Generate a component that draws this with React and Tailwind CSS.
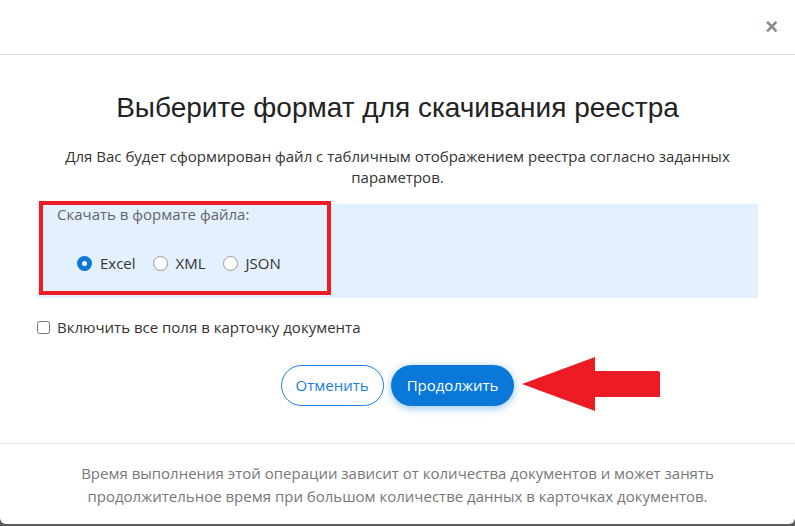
import { useState } from 'react';

export default function App() {
  const [format, setFormat] = useState('excel');
  const [allFields, setAllFields] = useState(false);

  const formats = [
    { id: 'excel', label: 'Excel' },
    { id: 'xml', label: 'XML' },
    { id: 'json', label: 'JSON' },
  ];

  return (
    <div className="w-[795px] h-[526px] bg-[#5a5a5a] overflow-hidden">
      <div className="h-[524px] bg-white rounded-b-[6px] flex flex-col text-[#333]" style={{ fontFamily: '"Open Sans", sans-serif' }}>
        {/* header */}
        <div className="h-[55px] shrink-0 border-b border-[#e3e3e3] flex items-center justify-end pr-[17px]">
          <button className="text-[#888] text-[22px] leading-none font-bold" style={{ fontFamily: '"Liberation Sans", sans-serif' }}>
            ×
          </button>
        </div>

        {/* body */}
        <div className="flex-1 px-[37px] pt-[37px]">
          <h2 className="text-center text-[28px] leading-[32px] text-[#222]" style={{ fontFamily: '"Liberation Sans", sans-serif' }}>
            Выберите формат для скачивания реестра
          </h2>
          <p className="text-center text-[15px] leading-[21px] mt-[22px] px-[10px]">
            Для Вас будет сформирован файл с табличным отображением реестра согласно заданных параметров.
          </p>

          <div className="relative mt-[16px] h-[94px] bg-[#e3f0fe] px-[20px] pt-0">
            <div className="text-[15px] leading-[21px] text-[#666]">Скачать в формате файла:</div>
            <div className="flex items-center gap-[17px] mt-[27px] pl-[20px]">
              {formats.map((f) => (
                <label key={f.id} className="flex items-center gap-[8px] text-[15px] text-[#333] cursor-pointer">
                  <span
                    onClick={() => setFormat(f.id)}
                    className={
                      format === f.id
                        ? 'w-[15px] h-[15px] rounded-full bg-[#0a78d8] flex items-center justify-center'
                        : 'w-[15px] h-[15px] rounded-full border border-[#999] bg-white'
                    }
                  >
                    {format === f.id && <span className="w-[5px] h-[5px] rounded-full bg-white" />}
                  </span>
                  {f.label}
                </label>
              ))}
            </div>
            {/* highlight frame */}
            <div className="absolute left-[2px] top-[-3px] w-[292px] h-[94px] border-[4px] border-[#ed1c24]" />
          </div>

          <label className="flex items-center gap-[7px] mt-[18px] text-[15px] text-[#333] cursor-pointer">
            <input
              type="checkbox"
              checked={allFields}
              onChange={(e) => setAllFields(e.target.checked)}
              className="w-[13px] h-[13px] m-0"
            />
            Включить все поля в карточку документа
          </label>

          <div className="flex items-center justify-center gap-[7px] mt-[26px] relative">
            <button className="h-[41px] px-[14px] rounded-full border border-[#1a7ee0] text-[#1a7ee0] text-[15px] bg-white">
              Отменить
            </button>
            <button className="h-[41px] px-[16px] rounded-full bg-[#0a78d8] text-white text-[15px] shadow-[0_2px_8px_rgba(10,120,216,0.45)]">
              Продолжить
            </button>
            <svg className="absolute left-[485px] top-[-8px]" width="140" height="54" viewBox="0 0 140 54">
              <path d="M0 27 L73 0 L73 14 L136 14 Q138 14 138 16 L138 40 L73 40 L73 54 Z" fill="#ed1c24" />
            </svg>
          </div>
        </div>

        {/* footer */}
        <div className="h-[81px] shrink-0 border-t border-[#e3e3e3] flex items-center justify-center px-[50px] pt-[2px]">
          <p className="text-center text-[15px] leading-[23px] text-[#777]">
            Время выполнения этой операции зависит от количества документов и может занять продолжительное время при большом количестве данных в карточках документов.
          </p>
        </div>
      </div>
    </div>
  );
}
